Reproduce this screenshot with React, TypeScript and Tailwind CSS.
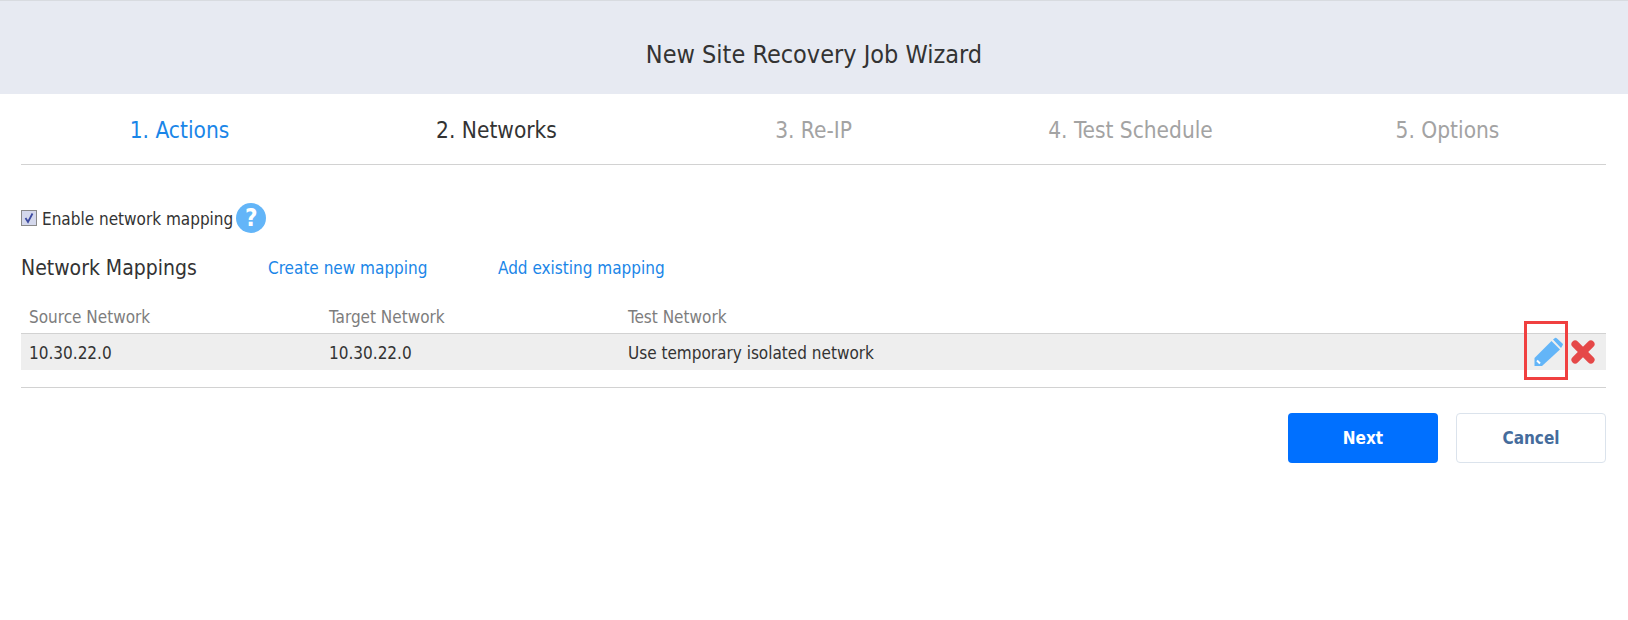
import React from "react";

const steps = [
  { label: "1. Actions", className: "text-[#1a86e8]" },
  { label: "2. Networks", className: "text-[#333333]" },
  { label: "3. Re-IP", className: "text-[#a3a3a3]" },
  { label: "4. Test Schedule", className: "text-[#a3a3a3]" },
  { label: "5. Options", className: "text-[#a3a3a3]" },
];

function HelpIcon() {
  return (
    <span className="flex h-[30px] w-[30px] items-center justify-center rounded-full bg-[#63b5f8] text-[24px] leading-none font-bold text-white">
      ?
    </span>
  );
}

function PencilIcon() {
  return (
    <svg width="30" height="30" viewBox="0 0 30 30">
      <path d="M0.5 21 L17.5 4 L26 12.5 L8 29 L0.5 29 Z" fill="#63b5f8" />
      <path d="M19 2.5 L21 1 Q22 0.5 23 1.5 L28.5 6.5 Q29.5 7.5 28.5 8.5 L27 11 Z" fill="#63b5f8" />
      <path d="M3 23.5 L6 26.5" stroke="#ffffff" strokeWidth="2" />
    </svg>
  );
}

function DeleteIcon() {
  return (
    <svg width="24" height="24" viewBox="0 0 26 26">
      <path d="M4.5 4.5 L21.5 21.5 M21.5 4.5 L4.5 21.5" stroke="#e54848" strokeWidth="8" strokeLinecap="round" />
    </svg>
  );
}

export default function App() {
  return (
    <div className="h-[620px] w-[1628px] bg-white font-['DejaVu_Sans_Condensed','DejaVu_Sans',sans-serif] [font-stretch:condensed] text-[#333333]">
      <div className="flex h-[94px] items-center justify-center border-t border-[#d8dbe0] bg-[#e7eaf2] pt-[15px] text-[25px]">
        New Site Recovery Job Wizard
      </div>

      <div className="pr-[22px] pl-[21px]">
        <div className="grid h-[71px] grid-cols-5 items-center border-b border-[#d2d2d2] text-[22.5px]">
          {steps.map((step) => (
            <div key={step.label} className={`pt-[4px] text-center ${step.className}`}>
              {step.label}
            </div>
          ))}
        </div>

        <div className="mt-[38px] flex h-[30px] items-center text-[17px]">
          <span className="mr-[5px] flex h-[16px] w-[16px] items-center justify-center border border-[#8a8a8a] bg-[#d4d8ec]">
            <svg width="12" height="12" viewBox="0 0 12 12">
              <path d="M2.5 6 L5 10 L9.5 1.5" fill="none" stroke="#3c4aa0" strokeWidth="1.8" />
            </svg>
          </span>
          <span className="mr-[3px] pt-[4px]">Enable network mapping</span>
          <HelpIcon />
        </div>

        <div className="mt-[20px] flex h-[30px] items-center">
          <span className="w-[247px] pt-[2px] text-[21px]">Network Mappings</span>
          <a className="w-[230px] pt-[2px] text-[17px] text-[#1a86e8]">Create new mapping</a>
          <a className="pt-[2px] text-[17px] text-[#1a86e8]">Add existing mapping</a>
        </div>

        <div className="mt-[16px] flex h-[35px] items-center border-b border-[#d2d2d2] pt-[4px] pl-2 text-[17px] text-[#7d7d7d]">
          <span className="w-[300px]">Source Network</span>
          <span className="w-[299px]">Target Network</span>
          <span>Test Network</span>
        </div>

        <div className="flex h-[36px] items-center bg-[#eeeeee] pl-2 text-[17px]">
          <span className="w-[300px] pt-[4px]">10.30.22.0</span>
          <span className="w-[299px] pt-[4px]">10.30.22.0</span>
          <span className="pt-[4px]">Use temporary isolated network</span>
          <div className="ml-auto flex items-center gap-[7px] pr-[11px]">
            <div className="relative">
              <PencilIcon />
              <div className="absolute top-[-16px] left-[-10px] h-[59px] w-[44px] border-[3px] border-[#f04040]" />
            </div>
            <DeleteIcon />
          </div>
        </div>

        <div className="mt-[17px] border-b border-[#d2d2d2]" />

        <div className="mt-[25px] flex justify-end gap-[18px]">
          <button className="h-[50px] w-[150px] rounded-[4px] bg-[#0070ff] pt-[2px] text-[17px] font-bold text-white">
            Next
          </button>
          <button className="h-[50px] w-[150px] rounded-[4px] border border-[#dbe3ec] bg-white pt-[2px] text-[17px] font-bold text-[#456c9c]">
            Cancel
          </button>
        </div>
      </div>
    </div>
  );
}
